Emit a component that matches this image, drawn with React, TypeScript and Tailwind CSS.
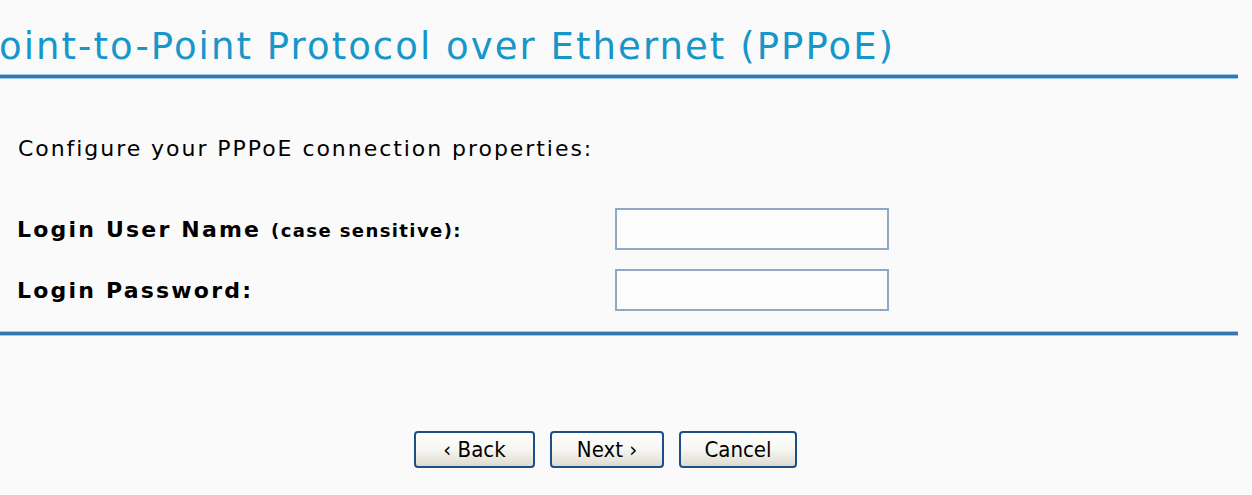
import React from "react";

const font = { fontFamily: '"DejaVu Sans", Verdana, sans-serif' };

function Rule() {
  return (
    <div className="mr-[14px] flex flex-col">
      <div className="h-px bg-[#9cc8ec]" />
      <div className="h-[3px] bg-[#3877ad]" />
      <div className="h-px bg-[#9cc8ec]" />
    </div>
  );
}

function WizardButton({ label, width }: { label: string; width: string }) {
  return (
    <button
      className={`${width} h-[37px] rounded-[4px] border-2 border-[#1d4f86] bg-gradient-to-b from-white via-[#f6f6f2] to-[#dedbd0] text-[22px] text-black leading-none`}
      style={{ fontFamily: '"DejaVu Sans Condensed", "DejaVu Sans", Tahoma, sans-serif' }}
    >
      {label}
    </button>
  );
}

export default function App() {
  return (
    <div className="h-[495px] w-[1252px] overflow-hidden bg-[#fafafa]" style={font}>
      <div className="h-[74px] overflow-hidden pt-[25px]">
        <h1 className="-ml-[24px] whitespace-nowrap text-[37px] leading-[44px] tracking-[2.05px] text-[#1796c9]">
          Point-to-Point Protocol over Ethernet (PPPoE)
        </h1>
      </div>
      <Rule />

      <p className="pl-[18px] pt-[56px] text-[22px] leading-[28px] tracking-[1.95px] text-black">
        Configure your PPPoE connection properties:
      </p>

      <div className="mt-[45px] flex flex-col gap-[19px] pl-[17px]">
        <div className="flex items-center">
          <label className="w-[598px] text-[22px] font-bold tracking-[2.2px] text-black">
            Login User Name <span className="text-[18px] tracking-[1.4px]">(case sensitive):</span>
          </label>
          <input type="text" className="h-[42px] w-[274px] border-2 border-[#8fa9c4] bg-[#fcfcfc] outline-none" />
        </div>
        <div className="flex items-center">
          <label className="w-[598px] text-[22px] font-bold tracking-[2.2px] text-black">Login Password:</label>
          <input type="password" className="h-[42px] w-[274px] border-2 border-[#8fa9c4] bg-[#fcfcfc] outline-none" />
        </div>
      </div>

      <div className="mt-[20px]">
        <Rule />
      </div>

      <div className="flex gap-[15px] pl-[414px] pt-[95px]">
        <WizardButton label="‹ Back" width="w-[121px]" />
        <WizardButton label="Next ›" width="w-[114px]" />
        <WizardButton label="Cancel" width="w-[118px]" />
      </div>
    </div>
  );
}
